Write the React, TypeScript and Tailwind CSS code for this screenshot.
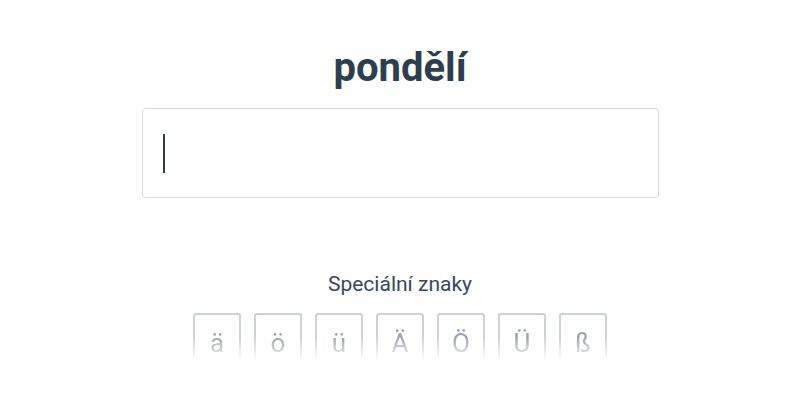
const CHARS = ["ä", "ö", "ü", "Ä", "Ö", "Ü", "ß"];

export default function App() {
  return (
    <div className="h-[400px] overflow-hidden bg-white font-['Roboto',sans-serif]">
      <div className="flex flex-col items-center pt-[41px]">
        <h1 className="text-[40px] leading-[54px] font-bold text-[#2c3e50]">pondělí</h1>
        <div className="mt-[13px] w-[517px] h-[90px] rounded-[4px] border border-[#d9d9d9] flex items-center px-[20px]">
          <div className="w-[2px] h-[39px] bg-[#2c3e50]" />
        </div>
        <p className="mt-[72px] text-[21px] leading-[28px] text-[#34495e]">Speciální znaky</p>
        <div className="mt-[15px] flex gap-[13px] h-[48px] [mask-image:linear-gradient(to_bottom,black_50%,transparent_100%)]">
          {CHARS.map((c) => (
            <button
              key={c}
              className="w-[48px] h-[60px] rounded-[3px] border-2 border-[#cdd2d7] text-[26px] text-[#9aa3ab] flex items-start justify-center pt-[9px]"
            >
              {c}
            </button>
          ))}
        </div>
      </div>
    </div>
  );
}
